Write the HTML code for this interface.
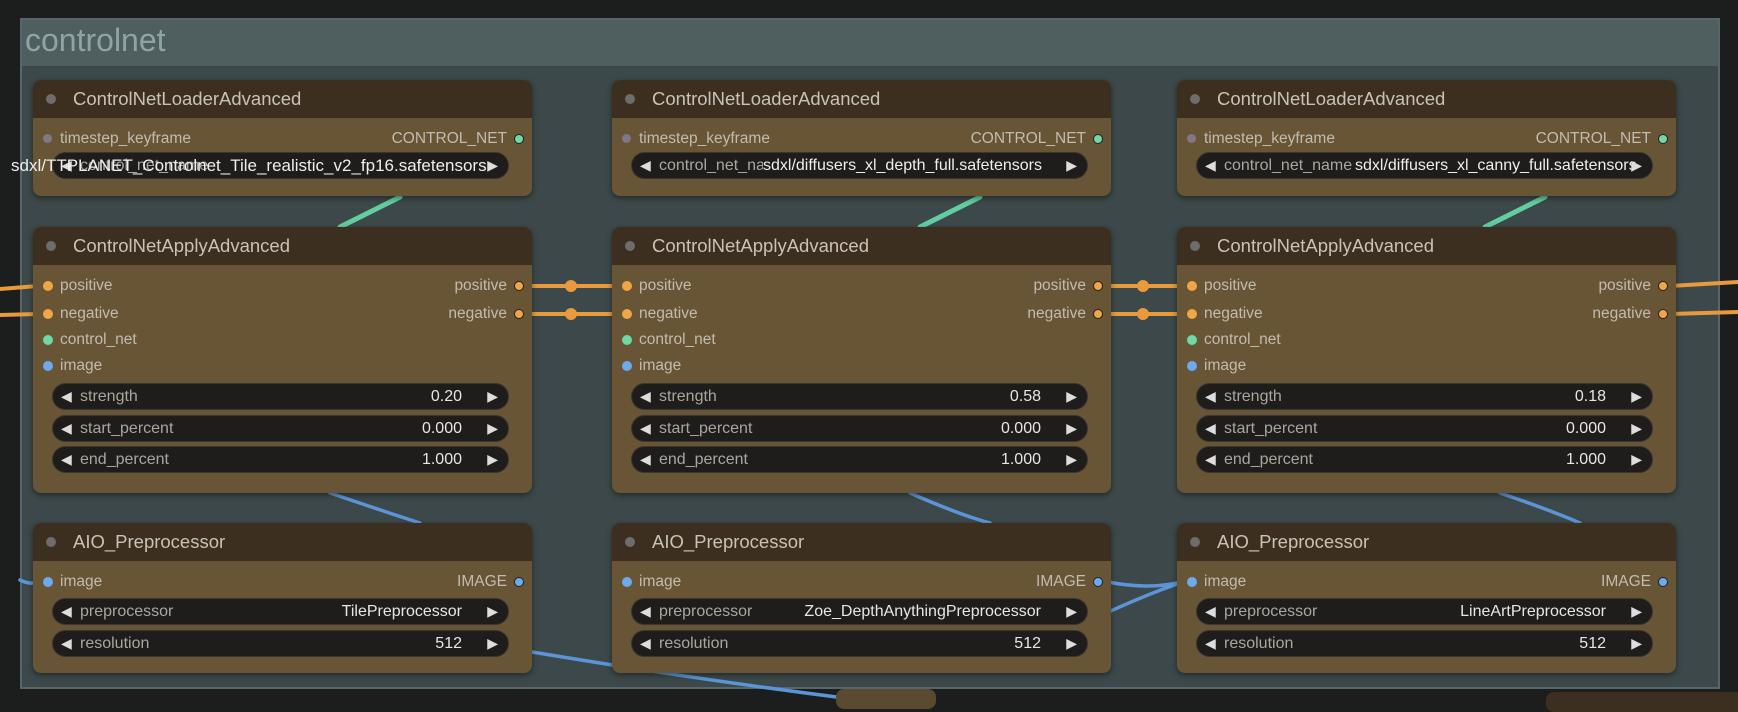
<!DOCTYPE html>
<html><head><meta charset="utf-8"><style>
*{margin:0;padding:0;box-sizing:border-box}
body{width:1738px;height:700px;background:#1c1d1d;position:relative;overflow:hidden;font-family:"Liberation Sans",sans-serif}
.grp{position:absolute;left:20px;top:18px;width:1700px;height:671px;background:#3c4849;border:2px solid #56666a}
.gt{position:absolute;left:0;top:0;width:100%;height:46px;background:#4f5f60;color:#8fa4a6;font-size:32px;padding:2px 0 0 3px}
.node{position:absolute;width:499px;background:#675536;border-radius:8px;box-shadow:0 2px 6px rgba(0,0,0,.45)}
.hd{height:38px;background:#3d2f20;border-radius:8px 8px 0 0;color:#c9c2b6;font-size:18.5px;line-height:38px;padding-left:40px;position:relative}
.hd:before{content:"";position:absolute;left:13px;top:14px;width:10px;height:10px;border-radius:50%;background:#6d6d6d}
.sl{position:absolute;font-size:15.5px;color:#c2bcb0;height:18px;line-height:18px}
.in{left:27px}.out{right:25px;text-align:right}
.d{position:absolute;width:10px;height:10px;border-radius:50%;top:4px}
.in .d{left:-17px}.out .d{right:-17px;border:1.5px solid #222}
.w{position:absolute;left:19px;width:457px;height:27px;background:#1f1d1b;border:1px solid #3a3630;border-radius:14px;font-size:16px;color:#aaa69f;line-height:25px;padding-left:27px}
.w:before{content:"◀";position:absolute;left:8px;color:#ddd;font-size:14px}
.w:after{content:"▶";position:absolute;right:10px;color:#ddd;font-size:14px}
.w b{font-weight:normal;position:absolute;right:46px;color:#e6e6e6}
.o{background:#f0a546}.g{background:#6ed8a6}.b{background:#6eaaee}.x{background:#7e7888}
</style></head><body>
<div class="grp"><div class="gt">controlnet</div></div>
<svg style="position:absolute;left:0;top:0" width="1738" height="700">
<g fill="none" stroke-linecap="round">
<path d="M400 197 L340 227" stroke="#62cda0" stroke-width="5"/>
<path d="M980 197 L920 227" stroke="#62cda0" stroke-width="5"/>
<path d="M1545 197 L1485 227" stroke="#62cda0" stroke-width="5"/>
<g stroke="#e89a3c" stroke-width="4">
<path d="M0 289 L38 286"/><path d="M0 315 L38 314"/>
<path d="M525 286 L617 286"/><path d="M525 314 L617 314"/>
<path d="M1104 286 L1182 286"/><path d="M1104 314 L1182 314"/>
<path d="M1670 286 L1738 282"/><path d="M1670 314 L1738 312"/>
</g>
<g stroke="#5b95d8" stroke-width="3.5">
<path d="M330 493 Q380 510 420 523"/>
<path d="M910 493 Q960 515 990 523"/>
<path d="M1500 493 Q1550 510 1580 523"/>
<path d="M20 580 Q30 585 38 582"/>
<path d="M520 650 Q700 680 860 700"/>
<path d="M1108 582 Q1150 590 1182 582"/>
<path d="M1050 640 Q1130 600 1180 583"/>
</g></g>
<g fill="#e89a3c"><circle cx="571" cy="286" r="6"/><circle cx="571" cy="314" r="6"/><circle cx="1143" cy="286" r="6"/><circle cx="1143" cy="314" r="6"/></g>
</svg>
<div style="position:absolute;left:836px;top:689px;width:100px;height:20px;background:#5a4a30;border-radius:8px"></div>
<div style="position:absolute;left:1546px;top:692px;width:200px;height:20px;background:#3d2f20;border-radius:8px"></div>

<div class="node" style="left:33px;top:80px;height:116px"><div class="hd">ControlNetLoaderAdvanced</div>
<div class="sl in" style="top:50px"><span class="d x" style="width:9px;height:9px"></span>timestep_keyframe</div>
<div class="sl out" style="top:50px">CONTROL_NET<span class="d g"></span></div>
<div class="w" style="top:72px">control_net_name<span style="position:absolute;left:-42px;color:#eee;white-space:nowrap;font-size:17px">sdxl/TTPLANET_Controlnet_Tile_realistic_v2_fp16.safetensors</span></div></div>
<div class="node" style="left:612px;top:80px;height:116px"><div class="hd">ControlNetLoaderAdvanced</div>
<div class="sl in" style="top:50px"><span class="d x" style="width:9px;height:9px"></span>timestep_keyframe</div>
<div class="sl out" style="top:50px">CONTROL_NET<span class="d g"></span></div>
<div class="w" style="top:72px">control_net_na<span style="position:absolute;left:131px;color:#eee;white-space:nowrap;font-size:16px;background:#1f1d1b">sdxl/diffusers_xl_depth_full.safetensors</span></div></div>
<div class="node" style="left:1177px;top:80px;height:116px"><div class="hd">ControlNetLoaderAdvanced</div>
<div class="sl in" style="top:50px"><span class="d x" style="width:9px;height:9px"></span>timestep_keyframe</div>
<div class="sl out" style="top:50px">CONTROL_NET<span class="d g"></span></div>
<div class="w" style="top:72px">control_net_name<span style="position:absolute;left:158px;color:#eee;white-space:nowrap;font-size:16px">sdxl/diffusers_xl_canny_full.safetensors</span></div></div>

<div class="node" style="left:33px;top:227px;height:266px"><div class="hd">ControlNetApplyAdvanced</div>
<div class="sl in" style="top:50px"><span class="d o"></span>positive</div><div class="sl out" style="top:50px">positive<span class="d o"></span></div>
<div class="sl in" style="top:78px"><span class="d o"></span>negative</div><div class="sl out" style="top:78px">negative<span class="d o"></span></div>
<div class="sl in" style="top:104px"><span class="d g"></span>control_net</div>
<div class="sl in" style="top:130px"><span class="d b"></span>image</div>
<div class="w" style="top:156px">strength<b>0.20</b></div>
<div class="w" style="top:188px">start_percent<b>0.000</b></div>
<div class="w" style="top:219px">end_percent<b>1.000</b></div></div>
<div class="node" style="left:612px;top:227px;height:266px"><div class="hd">ControlNetApplyAdvanced</div>
<div class="sl in" style="top:50px"><span class="d o"></span>positive</div><div class="sl out" style="top:50px">positive<span class="d o"></span></div>
<div class="sl in" style="top:78px"><span class="d o"></span>negative</div><div class="sl out" style="top:78px">negative<span class="d o"></span></div>
<div class="sl in" style="top:104px"><span class="d g"></span>control_net</div>
<div class="sl in" style="top:130px"><span class="d b"></span>image</div>
<div class="w" style="top:156px">strength<b>0.58</b></div>
<div class="w" style="top:188px">start_percent<b>0.000</b></div>
<div class="w" style="top:219px">end_percent<b>1.000</b></div></div>
<div class="node" style="left:1177px;top:227px;height:266px"><div class="hd">ControlNetApplyAdvanced</div>
<div class="sl in" style="top:50px"><span class="d o"></span>positive</div><div class="sl out" style="top:50px">positive<span class="d o"></span></div>
<div class="sl in" style="top:78px"><span class="d o"></span>negative</div><div class="sl out" style="top:78px">negative<span class="d o"></span></div>
<div class="sl in" style="top:104px"><span class="d g"></span>control_net</div>
<div class="sl in" style="top:130px"><span class="d b"></span>image</div>
<div class="w" style="top:156px">strength<b>0.18</b></div>
<div class="w" style="top:188px">start_percent<b>0.000</b></div>
<div class="w" style="top:219px">end_percent<b>1.000</b></div></div>

<div class="node" style="left:33px;top:523px;height:150px"><div class="hd">AIO_Preprocessor</div>
<div class="sl in" style="top:50px"><span class="d b"></span>image</div><div class="sl out" style="top:50px">IMAGE<span class="d b"></span></div>
<div class="w" style="top:75px">preprocessor<b>TilePreprocessor</b></div>
<div class="w" style="top:107px">resolution<b>512</b></div></div>
<div class="node" style="left:612px;top:523px;height:150px"><div class="hd">AIO_Preprocessor</div>
<div class="sl in" style="top:50px"><span class="d b"></span>image</div><div class="sl out" style="top:50px">IMAGE<span class="d b"></span></div>
<div class="w" style="top:75px">preprocessor<b>Zoe_DepthAnythingPreprocessor</b></div>
<div class="w" style="top:107px">resolution<b>512</b></div></div>
<div class="node" style="left:1177px;top:523px;height:150px"><div class="hd">AIO_Preprocessor</div>
<div class="sl in" style="top:50px"><span class="d b"></span>image</div><div class="sl out" style="top:50px">IMAGE<span class="d b"></span></div>
<div class="w" style="top:75px">preprocessor<b>LineArtPreprocessor</b></div>
<div class="w" style="top:107px">resolution<b>512</b></div></div>
</body></html>
